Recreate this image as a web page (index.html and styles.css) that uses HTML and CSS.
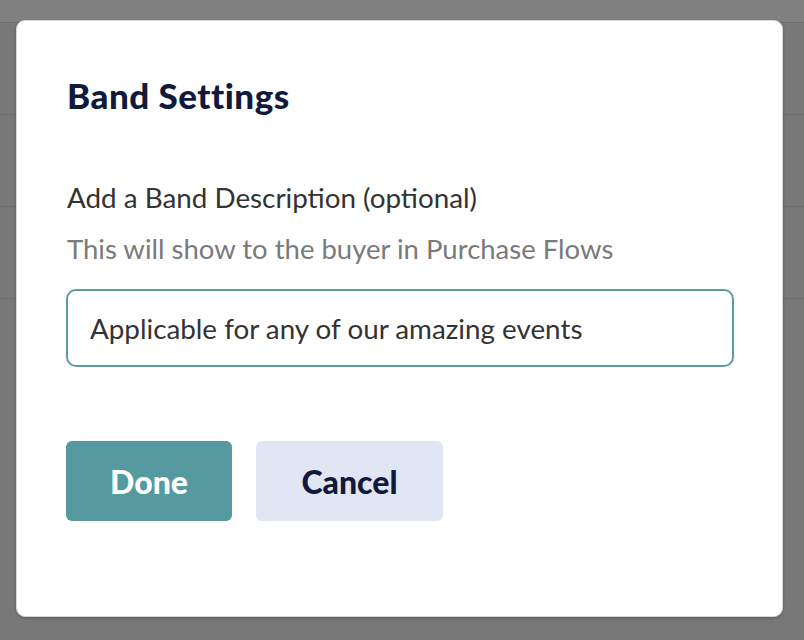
FILE: index.html
```html
<!DOCTYPE html>
<html>
<head>
<meta charset="utf-8">
<link rel="stylesheet" href="styles.css">
</head>
<body>
<div class="backdrop">
  <div class="bg-row bg-row-top"></div>
  <div class="bg-row"></div>
  <div class="bg-row"></div>
  <div class="bg-row"></div>
  <div class="bg-row bg-row-last"></div>
</div>
<div class="modal">
  <h1 class="title">Band Settings</h1>
  <div class="label">Add a Band Description (optional)</div>
  <div class="helper">This will show to the buyer in Purchase Flows</div>
  <div class="input">Applicable for any of our amazing events</div>
  <div class="actions">
    <button class="btn btn-primary">Done</button>
    <button class="btn btn-secondary">Cancel</button>
  </div>
</div>
</body>
</html>
```

FILE: styles.css
```css
html, body {
  margin: 0;
  padding: 0;
  width: 804px;
  height: 640px;
  overflow: hidden;
  font-family: Lato, "Open Sans", sans-serif;
}
body {
  position: relative;
  background: #787878;
}
.backdrop {
  display: flex;
  flex-direction: column;
  height: 640px;
}
.bg-row {
  height: 91px;
  border-bottom: 1px solid #6d6d6d;
  flex: none;
}
.bg-row-top {
  height: 22px;
  background: #808080;
}
.bg-row-last {
  flex: 1;
  border-bottom: none;
}
.modal {
  position: absolute;
  left: 16px;
  top: 20px;
  width: 765px;
  height: 595px;
  background: #fff;
  border: 1px solid #d6d6d6;
  border-radius: 9px;
  box-shadow: 0 1px 3px rgba(0,0,0,0.25);
  box-sizing: content-box;
}
.title {
  margin: 54px 0 0 50px;
  font-size: 35px;
  font-weight: 900;
  letter-spacing: 0.5px;
  color: #111a3c;
  line-height: 40px;
}
.label {
  margin: 67px 0 0 50px;
  font-size: 27.8px;
  color: #333;
  line-height: 32px;
}
.helper {
  margin: 19px 0 0 50px;
  font-size: 27.5px;
  color: #7a7a7a;
  line-height: 32px;
}
.input {
  margin: 24px 0 0 49px;
  width: 668px;
  height: 78px;
  box-sizing: border-box;
  border: 2px solid #5a9ea3;
  border-radius: 10px;
  padding: 0 22px;
  display: flex;
  align-items: center;
  font-size: 27.8px;
  color: #333;
}
.actions {
  display: flex;
  gap: 24px;
  margin: 74px 0 0 49px;
}
.btn {
  height: 80px;
  border: none;
  border-radius: 6px;
  font-family: Lato, sans-serif;
  font-size: 32px;
  font-weight: 900;
  padding: 0;
  cursor: pointer;
}
.btn-primary {
  width: 166px;
  background: #56999f;
  color: #fff;
}
.btn-secondary {
  width: 187px;
  background: #e1e6f4;
  color: #111a3c;
}
```
